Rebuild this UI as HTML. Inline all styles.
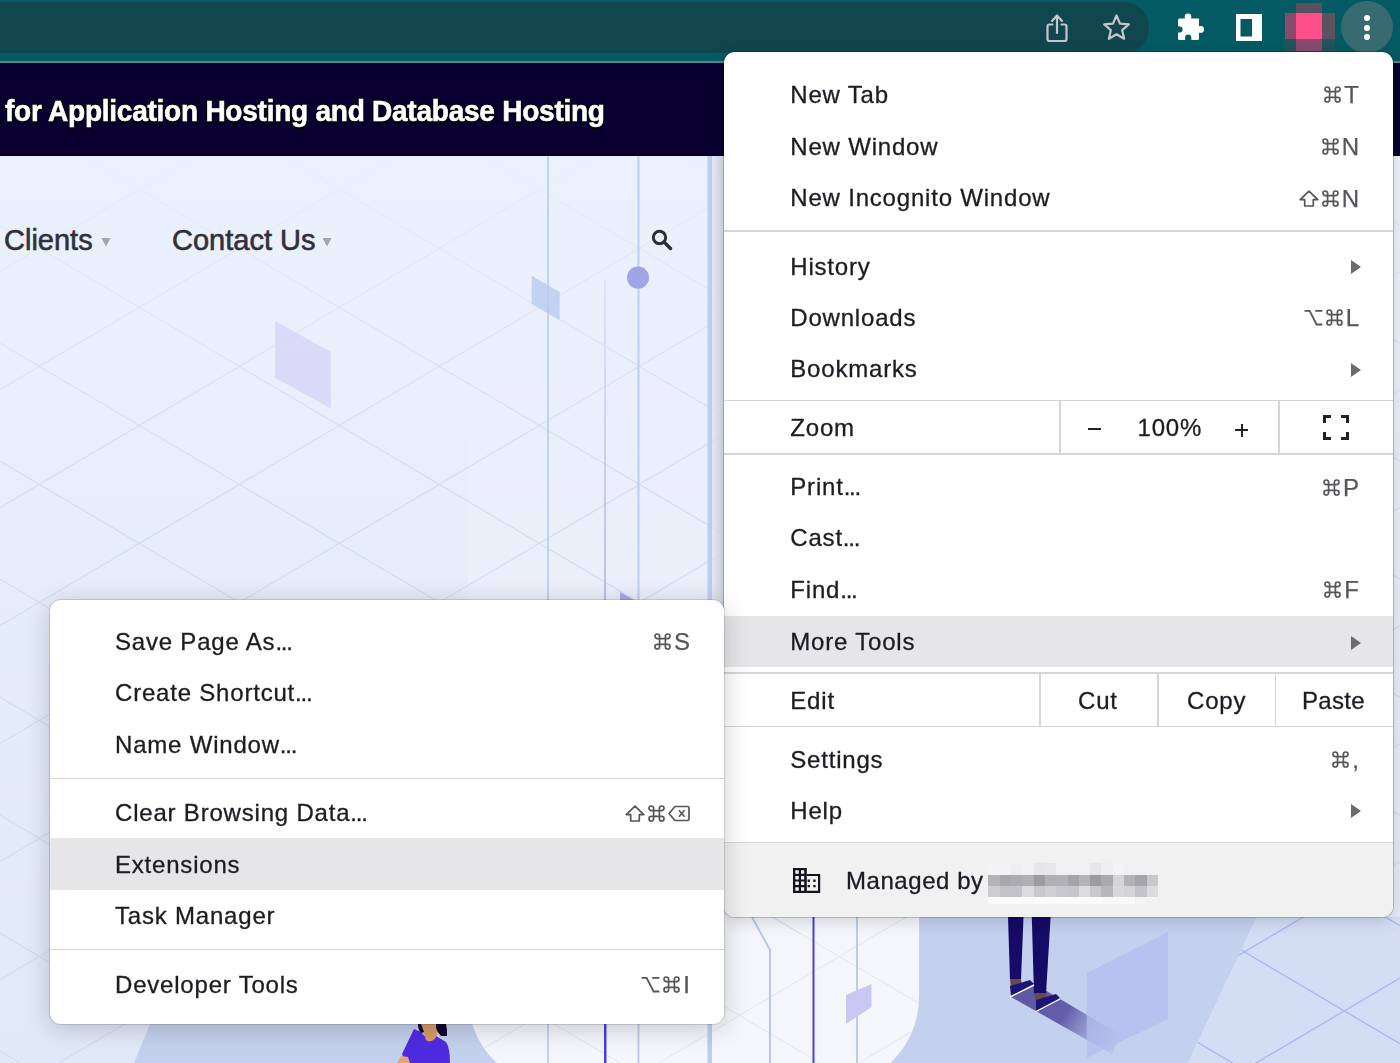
<!DOCTYPE html>
<html><head><meta charset="utf-8">
<style>
*{margin:0;padding:0;box-sizing:border-box}
html,body{width:1400px;height:1063px;overflow:hidden}
body{position:relative;background:#eaeefa;font-family:"Liberation Sans",sans-serif}
.abs{position:absolute}
#toolbar{left:0;top:0;width:1400px;height:63px;background:#045a62}
#omni{left:-40px;top:2px;width:1189px;height:51px;border-radius:0 25px 25px 0;background:#10474f}
#tline{left:0;top:61px;width:1400px;height:2px;background:#4a8a90}
#tline2{left:0;top:62.5px;width:1400px;height:1px;background:#000}
#hdr{left:0;top:63px;width:1400px;height:93px;background:#09002f;border-bottom:1px solid #050018}
#hdrtxt{left:5px;top:94px;font-weight:bold;font-size:30px;letter-spacing:-0.3px;color:#fff;white-space:nowrap;-webkit-text-stroke:0.6px #fff;transform:scaleX(0.936);transform-origin:0 0;
  text-shadow:1px 1px 0 #000,-1px 1px 0 #000,1px -1px 0 #000,-1px -1px 0 #000, 0 2px 1px #000}
#page{left:0;top:155px;width:1400px;height:908px;background:linear-gradient(#eff2fc,#e7ebf8)}
.nav{font-size:29px;color:#30303c;white-space:nowrap;-webkit-text-stroke:0.6px #30303c}
.menu{background:#fff;border-radius:11px;box-shadow:0 0 0 1px rgba(0,0,0,.13),0 5px 16px rgba(0,0,0,.14);overflow:hidden;will-change:transform}
.t{position:absolute;font-size:24px;line-height:24px;letter-spacing:0.8px;color:#1c1c24;white-space:nowrap;-webkit-text-stroke:0.3px #1c1c24}
.sc{position:absolute;display:flex;align-items:flex-end;height:17px;color:#55555c}
.sc .g{display:block;margin-left:3px}
.sc .k{display:block;-webkit-text-stroke:0.25px #55555c;font-size:24px;line-height:17px;height:17px;margin-left:3px;position:relative;top:0}
.arr{position:absolute}
.dots{letter-spacing:-1.2px}
.sep{position:absolute;left:0;right:0;height:1.5px;background:#d6d6d9}
.vsep{position:absolute;width:1.5px;background:#d6d6d9}
.hl{position:absolute;left:0;right:0;background:#e6e6e9}
.foot{position:absolute;left:0;right:0;background:#f1f1f1}
.zc{position:absolute}
</style></head><body>
<svg class="abs" style="left:0;top:0" width="1400" height="1063">
<defs>
<linearGradient id="bg" x1="0" y1="0" x2="0" y2="1"><stop offset="0" stop-color="#ebf1fc"/><stop offset="1" stop-color="#e1e8f7"/></linearGradient>
<linearGradient id="wp" x1="0" y1="0" x2="0" y2="1"><stop offset="0" stop-color="#f6f7fd" stop-opacity="0"/><stop offset="0.5" stop-color="#f6f7fd" stop-opacity="0.35"/><stop offset="1" stop-color="#f6f7fd" stop-opacity="1"/></linearGradient>
<linearGradient id="gm" gradientUnits="userSpaceOnUse" x1="0" y1="155" x2="0" y2="480"><stop offset="0" stop-color="#fff" stop-opacity="0.12"/><stop offset="0.45" stop-color="#fff" stop-opacity="0.5"/><stop offset="1" stop-color="#fff" stop-opacity="1"/></linearGradient>
<linearGradient id="sh" gradientUnits="userSpaceOnUse" x1="1022" y1="990" x2="1117" y2="1045"><stop offset="0" stop-color="#5d59a6"/><stop offset="0.45" stop-color="#625ea9"/><stop offset="1" stop-color="#aeb4e6" stop-opacity="0.4"/></linearGradient>
<mask id="gmask" maskUnits="userSpaceOnUse" x="0" y="155" width="1400" height="908">
<rect x="0" y="155" width="1400" height="908" fill="url(#gm)"/>
<path d="M134 1063L150 1024L919 917H1257L1188 1063Z" fill="#000"/>
<path d="M468 900H919V997A90 90 0 0 1 829 1087H558A90 90 0 0 1 468 997Z" fill="#fff" fill-opacity="0.5"/>
</mask>
<linearGradient id="ms" x1="0" y1="0" x2="1" y2="0"><stop offset="0" stop-color="#dfe4ef" stop-opacity="0.6"/><stop offset="1" stop-color="#d3d8e3"/></linearGradient>
<linearGradient id="l605" gradientUnits="userSpaceOnUse" x1="0" y1="280" x2="0" y2="600"><stop offset="0" stop-color="#dcdcf7"/><stop offset="0.5" stop-color="#c4c2f2"/><stop offset="1" stop-color="#a9a5ee"/></linearGradient>
<clipPath id="rc"><path d="M1257 917H1400V1063H1188Z"/></clipPath>
</defs>
<rect x="0" y="155" width="1400" height="908" fill="url(#bg)"/>
<path d="M468 300H919V997A90 90 0 0 1 829 1087H558A90 90 0 0 1 468 997Z" fill="url(#wp)"/>
<path d="M150 1024L919 917H1257L1188 1063H134Z" fill="#c4d1ee"/>
<path d="M1257 917H1400V1063H1188Z" fill="#d3def5"/>
<path d="M468 900H919V997A90 90 0 0 1 829 1087H558A90 90 0 0 1 468 997Z" fill="#f5f6fc"/>
<path d="M0 -600.8L1400 225.2M0 -482.8L1400 343.2M0 -364.8L1400 461.2M0 -246.8L1400 579.2M0 -128.8L1400 697.2M0 -10.8L1400 815.2M0 107.2L1400 933.2M0 225.2L1400 1051.2M0 343.2L1400 1169.2M0 461.2L1400 1287.2M0 579.2L1400 1405.2M0 697.2L1400 1523.2M0 815.2L1400 1641.2M0 933.2L1400 1759.2M0 1051.2L1400 1877.2M0 271.6L1400 -554.4M0 389.6L1400 -436.4M0 507.6L1400 -318.4M0 625.6L1400 -200.4M0 743.6L1400 -82.4M0 861.6L1400 35.6M0 979.6L1400 153.6M0 1097.6L1400 271.6M0 1215.6L1400 389.6M0 1333.6L1400 507.6M0 1451.6L1400 625.6M0 1569.6L1400 743.6M0 1687.6L1400 861.6M0 1805.6L1400 979.6" stroke="#d3d9f2" stroke-width="1.05" fill="none" mask="url(#gmask)"/>
<path d="M0 -608.2L1400 217.8M0 -490.2L1400 335.8M0 -372.2L1400 453.8M0 -254.2L1400 571.8M0 -136.2L1400 689.8M0 -18.2L1400 807.8M0 99.8L1400 925.8M0 217.8L1400 1043.8M0 335.8L1400 1161.8M0 453.8L1400 1279.8M0 571.8L1400 1397.8M0 689.8L1400 1515.8M0 807.8L1400 1633.8M0 925.8L1400 1751.8M0 1043.8L1400 1869.8M0 270.0L1400 -556.0M0 388.0L1400 -438.0M0 506.0L1400 -320.0M0 624.0L1400 -202.0M0 742.0L1400 -84.0M0 860.0L1400 34.0M0 978.0L1400 152.0M0 1096.0L1400 270.0M0 1214.0L1400 388.0M0 1332.0L1400 506.0M0 1450.0L1400 624.0M0 1568.0L1400 742.0M0 1686.0L1400 860.0M0 1804.0L1400 978.0" stroke="#abb5ee" stroke-width="1.3" fill="none" clip-path="url(#rc)"/>
<rect x="547.2" y="155" width="1.7" height="908" fill="#bccdee"/>
<rect x="637.5" y="155" width="2" height="908" fill="#bccdee"/>
<rect x="604.3" y="280" width="1.4" height="744" fill="url(#l605)"/>
<rect x="604" y="1024" width="2.5" height="40" fill="#4c3ee0"/>
<rect x="707.5" y="155" width="4.5" height="908" fill="#bccdee"/>
<rect x="712" y="155" width="12" height="762" fill="url(#ms)"/>
<path d="M531.7 275.7L559.7 292V320L531.7 304Z" fill="#b3c9ee" fill-opacity="0.75"/>
<path d="M275.2 321L330.8 352V408.6L275.2 377.7Z" fill="#d2d2f5" fill-opacity="0.7"/>
<circle cx="638" cy="277.6" r="11" fill="#a2a4e8"/>
<path d="M620 592L634 600H620Z" fill="#a9a7ee"/>
<path d="M752 917L770 950V1063" stroke="#b9c7ee" stroke-width="2" fill="none"/>
<rect x="812.5" y="917" width="2" height="146" fill="#4c3ee0"/>
<rect x="856" y="917" width="2" height="146" fill="#bccbeb"/>
<path d="M846 995L871.5 984V1007L846 1024Z" fill="#c9c8f4"/>
<path d="M1011 997L1033 983L1121 1035L1112 1054Z" fill="url(#sh)"/>
<path d="M1086.7 973L1167.8 932V1019L1086.7 1058Z" fill="#b3bdee" fill-opacity="0.75"/>
<path d="M1008 917H1023.5L1021 980H1010Z" fill="#160b66"/>
<path d="M1031.8 917H1050.6L1046 994H1034Z" fill="#160b66"/>
<path d="M1010 979H1021L1022 987L1011 990Z" fill="#6a4850"/>
<path d="M1034 993H1046L1047 1000L1036 1003Z" fill="#6a4850"/>
<path d="M1010 986L1030 980L1034 984L1011 997Z" fill="#1e1478"/>
<path d="M1010 997L1034 985" stroke="#fff" stroke-width="1.4"/>
<path d="M1036 1000L1056 994L1060 998L1036 1011Z" fill="#1e1478"/>
<path d="M1035 1012L1060 999" stroke="#fff" stroke-width="1.4"/>
<path d="M402 1054L414 1029L421 1032Q428 1042 436 1036L446 1042Q450 1048 450 1063H406Z" fill="#4f2be0"/>
<path d="M420 1024H437V1034Q436 1041 429 1041.5Q425 1041 425 1036L420 1030Z" fill="#d99a6a"/>
<path d="M436 1024H446Q447.5 1030 447 1036L441 1036Q437 1032 436 1028Z" fill="#0c0630"/>
<path d="M418 1024H421L424 1032L421 1033Q418 1030 418 1024Z" fill="#0c0630"/>
<path d="M397 1063L401 1056L408 1057L410 1063Z" fill="#e6a47a"/>
</svg>
<div id="toolbar" class="abs"></div>
<div id="omni" class="abs"></div>
<div id="tline" class="abs"></div>
<div id="tline2" class="abs"></div>
<svg class="abs" style="left:1040px;top:8px" width="100" height="40" viewBox="1040 8 100 40">
<path d="M1052.5 24.5H1049.5Q1047.5 24.5 1047.5 26.5V39Q1047.5 41 1049.5 41H1064.5Q1066.5 41 1066.5 39V26.5Q1066.5 24.5 1064.5 24.5H1061.5" fill="none" stroke="#c5c6cb" stroke-width="2.2" stroke-linecap="round"/>
<path d="M1057 33V16M1052 21L1057 15.5L1062 21" fill="none" stroke="#c5c6cb" stroke-width="2.2" stroke-linecap="round" stroke-linejoin="round"/>
<path d="M1116.5 15.5L1120 23.6L1128.8 24.4L1122.2 30.2L1124.1 38.8L1116.5 34.3L1108.9 38.8L1110.8 30.2L1104.2 24.4L1113 23.6Z" fill="none" stroke="#c5c6cb" stroke-width="2.2" stroke-linejoin="round"/>
</svg>
<svg class="abs" style="left:1170px;top:8px" width="100" height="40" viewBox="1170 8 100 40">
<path d="M1179.5 18.5H1199V38.5Q1199 40 1197.5 40H1179.5Q1178 40 1178 38.5V20Q1178 18.5 1179.5 18.5Z" fill="#fff"/>
<circle cx="1188" cy="16.8" r="3.3" fill="#fff"/><rect x="1185.2" y="16.8" width="5.6" height="3" fill="#fff"/>
<circle cx="1200.6" cy="29.4" r="3.4" fill="#fff"/><rect x="1197" y="26.6" width="3.6" height="5.6" fill="#fff"/>
<circle cx="1179.6" cy="29.4" r="3" fill="#045a62"/><rect x="1176" y="26.4" width="3.6" height="6" fill="#045a62"/>
<circle cx="1188.2" cy="37.6" r="3.1" fill="#045a62"/><rect x="1185.1" y="37.6" width="6.2" height="3" fill="#045a62"/>
<rect x="1236" y="14" width="26" height="27" fill="#fff"/>
<rect x="1240.5" y="19" width="11.5" height="17.5" fill="#045a62"/>
</svg>
<div class="abs" style="left:1296px;top:3px;width:26px;height:10px;background:#5b4f62"></div>
<div class="abs" style="left:1285px;top:13px;width:11px;height:26px;background:#8a4a6c"></div>
<div class="abs" style="left:1296px;top:13px;width:26px;height:26px;background:#fe4f8a"></div>
<div class="abs" style="left:1322px;top:13px;width:13px;height:26px;background:#5b5262"></div>
<div class="abs" style="left:1296px;top:39px;width:26px;height:12px;background:#874a6e"></div>
<div class="abs" style="left:1285px;top:39px;width:11px;height:12px;background:#24525d"></div>
<div class="abs" style="left:1322px;top:39px;width:13px;height:12px;background:#24525d"></div>
<div class="abs" style="left:1341px;top:1px;width:52px;height:52px;border-radius:50%;background:#386b71"></div>
<div class="abs" style="left:1364px;top:15px;width:6px;height:6px;border-radius:50%;background:#fff"></div>
<div class="abs" style="left:1364px;top:24.5px;width:6px;height:6px;border-radius:50%;background:#fff"></div>
<div class="abs" style="left:1364px;top:34px;width:6px;height:6px;border-radius:50%;background:#fff"></div>
<div id="hdr" class="abs"></div>
<div id="hdrtxt" class="abs">for Application Hosting and Database Hosting</div>

<div class="abs nav" style="left:4px;top:224px">Clients</div>
<div class="abs nav" style="left:172px;top:224px">Contact Us</div>
<svg class="abs" style="left:0;top:0" width="700" height="300">
<path d="M101.5 238H110.5L106 246.5Z" fill="#a3a4ad"/>
<path d="M322.5 238H331.5L327 246.5Z" fill="#a3a4ad"/>
<circle cx="659.5" cy="237.5" r="6.2" fill="none" stroke="#2e2e3a" stroke-width="3"/>
<path d="M664 242L670.5 248.5" stroke="#2e2e3a" stroke-width="3.4" stroke-linecap="round"/>
</svg>

<div id="menu" class="abs menu" style="left:724px;top:52px;width:669px;height:865px;box-shadow:0 0 0 1px rgba(0,0,0,.2),0 5px 16px rgba(0,0,0,.14)">
<div class="hl" style="top:563.5px;height:51px"></div>
<div class="foot" style="top:791px;height:80px"></div>
<div class="sep" style="top:178.25px"></div>
<div class="sep" style="top:347.75px"></div>
<div class="sep" style="top:401.25px"></div>
<div class="sep" style="top:620.25px"></div>
<div class="sep" style="top:673.75px"></div>
<div class="sep" style="top:789.75px"></div>
<div class="vsep" style="left:335.25px;top:348.5px;height:53.5px"></div>
<div class="vsep" style="left:554.25px;top:348.5px;height:53.5px"></div>
<div class="vsep" style="left:315.25px;top:621px;height:53.5px"></div>
<div class="vsep" style="left:433.25px;top:621px;height:53.5px"></div>
<div class="vsep" style="left:550.75px;top:621px;height:53.5px"></div>
<div class="t" style="top:30.7px;left:66.3px">New Tab</div>
<div class="sc" style="top:34.0px;right:34px"><span class="g"><svg width="17" height="17" viewBox="0 0 17 17" style="display:block"><path d="M5.6 5.6V3.3A2.3 2.3 0 1 0 3.3 5.6H13.7A2.3 2.3 0 1 0 11.4 3.3V13.7A2.3 2.3 0 1 0 13.7 11.4H3.3A2.3 2.3 0 1 0 5.6 13.7Z" fill="none" stroke="#55555c" stroke-width="1.7" stroke-linejoin="round"/></svg></span><span class="k">T</span></div>
<div class="t" style="top:82.7px;left:66.3px">New Window</div>
<div class="sc" style="top:86.0px;right:34px"><span class="g"><svg width="17" height="17" viewBox="0 0 17 17" style="display:block"><path d="M5.6 5.6V3.3A2.3 2.3 0 1 0 3.3 5.6H13.7A2.3 2.3 0 1 0 11.4 3.3V13.7A2.3 2.3 0 1 0 13.7 11.4H3.3A2.3 2.3 0 1 0 5.6 13.7Z" fill="none" stroke="#55555c" stroke-width="1.7" stroke-linejoin="round"/></svg></span><span class="k">N</span></div>
<div class="t" style="top:134.2px;left:66.3px">New Incognito Window</div>
<div class="sc" style="top:137.5px;right:34px"><span class="g"><svg width="20" height="17" viewBox="0 0 20 17" style="display:block"><path d="M10 1.2L18.8 9.6H14.3V16H5.7V9.6H1.2Z" fill="none" stroke="#55555c" stroke-width="1.7" stroke-linejoin="round"/></svg></span><span class="g"><svg width="17" height="17" viewBox="0 0 17 17" style="display:block"><path d="M5.6 5.6V3.3A2.3 2.3 0 1 0 3.3 5.6H13.7A2.3 2.3 0 1 0 11.4 3.3V13.7A2.3 2.3 0 1 0 13.7 11.4H3.3A2.3 2.3 0 1 0 5.6 13.7Z" fill="none" stroke="#55555c" stroke-width="1.7" stroke-linejoin="round"/></svg></span><span class="k">N</span></div>
<div class="t" style="top:202.7px;left:66.3px">History</div>
<div class="arr" style="top:208.0px;right:32px"><svg width="10" height="14" viewBox="0 0 10 14" style="display:block"><path d="M0 0L10 7L0 14Z" fill="#6b6b70"/></svg></div>
<div class="t" style="top:253.7px;left:66.3px">Downloads</div>
<div class="sc" style="top:257.0px;right:34px"><span class="g"><svg width="19" height="17" viewBox="0 0 19 17" style="display:block"><path d="M0.5 1.9H5.6L12.6 15.5H18.4M11.2 1.9H18.4" fill="none" stroke="#55555c" stroke-width="1.8"/></svg></span><span class="g"><svg width="17" height="17" viewBox="0 0 17 17" style="display:block"><path d="M5.6 5.6V3.3A2.3 2.3 0 1 0 3.3 5.6H13.7A2.3 2.3 0 1 0 11.4 3.3V13.7A2.3 2.3 0 1 0 13.7 11.4H3.3A2.3 2.3 0 1 0 5.6 13.7Z" fill="none" stroke="#55555c" stroke-width="1.7" stroke-linejoin="round"/></svg></span><span class="k">L</span></div>
<div class="t" style="top:305.2px;left:66.3px">Bookmarks</div>
<div class="arr" style="top:310.5px;right:32px"><svg width="10" height="14" viewBox="0 0 10 14" style="display:block"><path d="M0 0L10 7L0 14Z" fill="#6b6b70"/></svg></div>
<div class="t" style="top:423.3px;left:66.3px">Print<span class="dots">...</span></div>
<div class="sc" style="top:426.6px;right:34px"><span class="g"><svg width="17" height="17" viewBox="0 0 17 17" style="display:block"><path d="M5.6 5.6V3.3A2.3 2.3 0 1 0 3.3 5.6H13.7A2.3 2.3 0 1 0 11.4 3.3V13.7A2.3 2.3 0 1 0 13.7 11.4H3.3A2.3 2.3 0 1 0 5.6 13.7Z" fill="none" stroke="#55555c" stroke-width="1.7" stroke-linejoin="round"/></svg></span><span class="k">P</span></div>
<div class="t" style="top:474.3px;left:66.3px">Cast<span class="dots">...</span></div>
<div class="t" style="top:526.0px;left:66.3px">Find<span class="dots">...</span></div>
<div class="sc" style="top:529.3px;right:34px"><span class="g"><svg width="17" height="17" viewBox="0 0 17 17" style="display:block"><path d="M5.6 5.6V3.3A2.3 2.3 0 1 0 3.3 5.6H13.7A2.3 2.3 0 1 0 11.4 3.3V13.7A2.3 2.3 0 1 0 13.7 11.4H3.3A2.3 2.3 0 1 0 5.6 13.7Z" fill="none" stroke="#55555c" stroke-width="1.7" stroke-linejoin="round"/></svg></span><span class="k">F</span></div>
<div class="t" style="top:578.2px;left:66.3px">More Tools</div>
<div class="arr" style="top:583.5px;right:32px"><svg width="10" height="14" viewBox="0 0 10 14" style="display:block"><path d="M0 0L10 7L0 14Z" fill="#6b6b70"/></svg></div>
<div class="t" style="top:695.7px;left:66.3px">Settings</div>
<div class="sc" style="top:699.0px;right:34px"><span class="g"><svg width="17" height="17" viewBox="0 0 17 17" style="display:block"><path d="M5.6 5.6V3.3A2.3 2.3 0 1 0 3.3 5.6H13.7A2.3 2.3 0 1 0 11.4 3.3V13.7A2.3 2.3 0 1 0 13.7 11.4H3.3A2.3 2.3 0 1 0 5.6 13.7Z" fill="none" stroke="#55555c" stroke-width="1.7" stroke-linejoin="round"/></svg></span><span class="k">,</span></div>
<div class="t" style="top:746.7px;left:66.3px">Help</div>
<div class="arr" style="top:752.0px;right:32px"><svg width="10" height="14" viewBox="0 0 10 14" style="display:block"><path d="M0 0L10 7L0 14Z" fill="#6b6b70"/></svg></div>
<div class="t" style="top:364.2px;left:66.3px">Zoom</div>
<div class="t" style="top:636.7px;left:66.3px">Edit</div>
<div class="zc" style="left:363.5px;top:376px;width:13.5px;height:2px;background:#222"></div>
<div class="t" style="top:364.2px;left:413.5px">100%</div>
<div class="zc" style="left:511px;top:377px;width:13px;height:2px;background:#222"></div>
<div class="zc" style="left:516.5px;top:371.5px;width:2px;height:13px;background:#222"></div>
<svg class="zc" style="left:598px;top:362px" width="28" height="27" viewBox="0 0 28 27"><path d="M2.5 9V2.5H9M19 2.5H25.5V9M25.5 18V24.5H19M9 24.5H2.5V18" fill="none" stroke="#222" stroke-width="3"/></svg>
<div class="t" style="top:636.7px;left:354px">Cut</div>
<div class="t" style="top:636.7px;left:463px">Copy</div>
<div class="t" style="top:636.7px;left:578px;letter-spacing:0.3px">Paste</div>
<svg class="zc" style="left:69px;top:816px" width="28" height="26" viewBox="0 0 28 26"><rect x="0" y="0" width="13.8" height="25" fill="#141420"/><path d="M2.3 2.3h3.5v3.5H2.3zM8 2.3h3.2v3.5H8zM2.3 8h3.5v3.5H2.3zM8 8h3.2v3.5H8zM2.3 13.6h3.5v3.5H2.3zM8 13.6h3.2v3.5H8zM2.3 19.2h3.5v3.5H2.3zM8 19.2h3.2v3.5H8z" fill="#f2f2f4"/><path d="M13.5 7H26.1V23.9H13.5" fill="none" stroke="#141420" stroke-width="2.2"/><path d="M14.6 11.6h2.3v2.3h-2.3zM20.3 11.6h2.3v2.3h-2.3zM14.6 17h2.3v2.3h-2.3zM20.3 17h2.3v2.3h-2.3z" fill="#141420"/></svg>
<div class="t" style="top:816.7px;left:122px;letter-spacing:0.55px">Managed by</div>
<div class="zc" style="left:264.4px;top:811.4px;width:11.4px;height:11.3px;background:#f4f4f6"></div>
<div class="zc" style="left:275.7px;top:811.4px;width:11.4px;height:11.3px;background:#f3f3f5"></div>
<div class="zc" style="left:287.0px;top:811.4px;width:11.4px;height:11.3px;background:#eeeef0"></div>
<div class="zc" style="left:298.3px;top:811.4px;width:11.4px;height:11.3px;background:#f1f1f3"></div>
<div class="zc" style="left:309.6px;top:811.4px;width:11.4px;height:11.3px;background:#e6e6e8"></div>
<div class="zc" style="left:320.9px;top:811.4px;width:11.4px;height:11.3px;background:#e8e8ea"></div>
<div class="zc" style="left:332.2px;top:811.4px;width:11.4px;height:11.3px;background:#f0f0f2"></div>
<div class="zc" style="left:343.5px;top:811.4px;width:11.4px;height:11.3px;background:#f0f0f2"></div>
<div class="zc" style="left:354.8px;top:811.4px;width:11.4px;height:11.3px;background:#f0f0f2"></div>
<div class="zc" style="left:366.1px;top:811.4px;width:11.4px;height:11.3px;background:#e6e6e8"></div>
<div class="zc" style="left:377.4px;top:811.4px;width:11.4px;height:11.3px;background:#eeeef0"></div>
<div class="zc" style="left:388.7px;top:811.4px;width:11.4px;height:11.3px;background:#f3f3f5"></div>
<div class="zc" style="left:400.0px;top:811.4px;width:11.4px;height:11.3px;background:#f0f0f2"></div>
<div class="zc" style="left:411.3px;top:811.4px;width:11.4px;height:11.3px;background:#f0f0f2"></div>
<div class="zc" style="left:422.6px;top:811.4px;width:11.4px;height:11.3px;background:#f0f0f2"></div>
<div class="zc" style="left:264.4px;top:822.7px;width:11.4px;height:11.3px;background:#b4b4b8"></div>
<div class="zc" style="left:275.7px;top:822.7px;width:11.4px;height:11.3px;background:#a8a8ac"></div>
<div class="zc" style="left:287.0px;top:822.7px;width:11.4px;height:11.3px;background:#acacb0"></div>
<div class="zc" style="left:298.3px;top:822.7px;width:11.4px;height:11.3px;background:#b0b0b4"></div>
<div class="zc" style="left:309.6px;top:822.7px;width:11.4px;height:11.3px;background:#9c9c9e"></div>
<div class="zc" style="left:320.9px;top:822.7px;width:11.4px;height:11.3px;background:#b0b0b4"></div>
<div class="zc" style="left:332.2px;top:822.7px;width:11.4px;height:11.3px;background:#b2b2b6"></div>
<div class="zc" style="left:343.5px;top:822.7px;width:11.4px;height:11.3px;background:#a4a4a8"></div>
<div class="zc" style="left:354.8px;top:822.7px;width:11.4px;height:11.3px;background:#b4b4b8"></div>
<div class="zc" style="left:366.1px;top:822.7px;width:11.4px;height:11.3px;background:#9d9b9c"></div>
<div class="zc" style="left:377.4px;top:822.7px;width:11.4px;height:11.3px;background:#a8aab0"></div>
<div class="zc" style="left:388.7px;top:822.7px;width:11.4px;height:11.3px;background:#d5d5d7"></div>
<div class="zc" style="left:400.0px;top:822.7px;width:11.4px;height:11.3px;background:#b2b2b6"></div>
<div class="zc" style="left:411.3px;top:822.7px;width:11.4px;height:11.3px;background:#a4a5aa"></div>
<div class="zc" style="left:422.6px;top:822.7px;width:11.4px;height:11.3px;background:#c9c9cc"></div>
<div class="zc" style="left:264.4px;top:834.0px;width:11.4px;height:11.3px;background:#cdcdd0"></div>
<div class="zc" style="left:275.7px;top:834.0px;width:11.4px;height:11.3px;background:#c4c4c8"></div>
<div class="zc" style="left:287.0px;top:834.0px;width:11.4px;height:11.3px;background:#c4c4c8"></div>
<div class="zc" style="left:298.3px;top:834.0px;width:11.4px;height:11.3px;background:#dcdcde"></div>
<div class="zc" style="left:309.6px;top:834.0px;width:11.4px;height:11.3px;background:#c8c8cc"></div>
<div class="zc" style="left:320.9px;top:834.0px;width:11.4px;height:11.3px;background:#d0d0d2"></div>
<div class="zc" style="left:332.2px;top:834.0px;width:11.4px;height:11.3px;background:#c8c8cc"></div>
<div class="zc" style="left:343.5px;top:834.0px;width:11.4px;height:11.3px;background:#c6c6ca"></div>
<div class="zc" style="left:354.8px;top:834.0px;width:11.4px;height:11.3px;background:#dcdcde"></div>
<div class="zc" style="left:366.1px;top:834.0px;width:11.4px;height:11.3px;background:#c8c8cc"></div>
<div class="zc" style="left:377.4px;top:834.0px;width:11.4px;height:11.3px;background:#b8b8bc"></div>
<div class="zc" style="left:388.7px;top:834.0px;width:11.4px;height:11.3px;background:#d8d8da"></div>
<div class="zc" style="left:400.0px;top:834.0px;width:11.4px;height:11.3px;background:#d4d4d6"></div>
<div class="zc" style="left:411.3px;top:834.0px;width:11.4px;height:11.3px;background:#c4c4c8"></div>
<div class="zc" style="left:422.6px;top:834.0px;width:11.4px;height:11.3px;background:#dcdcde"></div>
<div class="zc" style="left:264.4px;top:845.3px;width:11.4px;height:6.5px;background:#fafafb"></div>
<div class="zc" style="left:275.7px;top:845.3px;width:11.4px;height:6.5px;background:#fbfbfc"></div>
<div class="zc" style="left:287.0px;top:845.3px;width:11.4px;height:6.5px;background:#fbfbfc"></div>
<div class="zc" style="left:298.3px;top:845.3px;width:11.4px;height:6.5px;background:#fafafb"></div>
<div class="zc" style="left:309.6px;top:845.3px;width:11.4px;height:6.5px;background:#fcfcfd"></div>
<div class="zc" style="left:320.9px;top:845.3px;width:11.4px;height:6.5px;background:#fbfbfc"></div>
<div class="zc" style="left:332.2px;top:845.3px;width:11.4px;height:6.5px;background:#fafafb"></div>
<div class="zc" style="left:343.5px;top:845.3px;width:11.4px;height:6.5px;background:#fafafb"></div>
<div class="zc" style="left:354.8px;top:845.3px;width:11.4px;height:6.5px;background:#fbfbfc"></div>
<div class="zc" style="left:366.1px;top:845.3px;width:11.4px;height:6.5px;background:#fafafb"></div>
<div class="zc" style="left:377.4px;top:845.3px;width:11.4px;height:6.5px;background:#f8f8f9"></div>
<div class="zc" style="left:388.7px;top:845.3px;width:11.4px;height:6.5px;background:#f9f9fa"></div>
<div class="zc" style="left:400.0px;top:845.3px;width:11.4px;height:6.5px;background:#fafafb"></div>
<div class="zc" style="left:411.3px;top:845.3px;width:11.4px;height:6.5px;background:#f4f4f6"></div>
<div class="zc" style="left:422.6px;top:845.3px;width:11.4px;height:6.5px;background:#f3f3f5"></div>
</div>

<div id="sub" class="abs menu" style="left:50px;top:600px;width:674px;height:424px;box-shadow:0 0 0 1px rgba(0,0,0,.12),0 4px 26px rgba(0,0,0,.2)">
<div class="hl" style="top:238px;height:51.5px"></div>
<div class="sep" style="top:177.65px"></div>
<div class="sep" style="top:348.85px"></div>
<div class="t" style="top:29.7px;left:65px">Save Page As<span class="dots">...</span></div>
<div class="sc" style="top:33.0px;right:34px"><span class="g"><svg width="17" height="17" viewBox="0 0 17 17" style="display:block"><path d="M5.6 5.6V3.3A2.3 2.3 0 1 0 3.3 5.6H13.7A2.3 2.3 0 1 0 11.4 3.3V13.7A2.3 2.3 0 1 0 13.7 11.4H3.3A2.3 2.3 0 1 0 5.6 13.7Z" fill="none" stroke="#55555c" stroke-width="1.7" stroke-linejoin="round"/></svg></span><span class="k">S</span></div>
<div class="t" style="top:81.1px;left:65px">Create Shortcut<span class="dots">...</span></div>
<div class="t" style="top:132.6px;left:65px">Name Window<span class="dots">...</span></div>
<div class="t" style="top:201.3px;left:65px">Clear Browsing Data<span class="dots">...</span></div>
<div class="sc" style="top:204.6px;right:34px"><span class="g"><svg width="20" height="17" viewBox="0 0 20 17" style="display:block"><path d="M10 1.2L18.8 9.6H14.3V16H5.7V9.6H1.2Z" fill="none" stroke="#55555c" stroke-width="1.7" stroke-linejoin="round"/></svg></span><span class="g"><svg width="17" height="17" viewBox="0 0 17 17" style="display:block"><path d="M5.6 5.6V3.3A2.3 2.3 0 1 0 3.3 5.6H13.7A2.3 2.3 0 1 0 11.4 3.3V13.7A2.3 2.3 0 1 0 13.7 11.4H3.3A2.3 2.3 0 1 0 5.6 13.7Z" fill="none" stroke="#55555c" stroke-width="1.7" stroke-linejoin="round"/></svg></span><span class="g"><svg width="22" height="17" viewBox="0 0 22 17" style="display:block"><path d="M7 1.5H19.5Q21 1.5 21 3V14Q21 15.5 19.5 15.5H7L1 8.5Z" fill="none" stroke="#55555c" stroke-width="1.7" stroke-linejoin="round"/><path d="M11 5.2L16.5 11.8M16.5 5.2L11 11.8" stroke="#55555c" stroke-width="1.6"/></svg></span></div>
<div class="t" style="top:252.6px;left:65px">Extensions</div>
<div class="t" style="top:303.7px;left:65px">Task Manager</div>
<div class="t" style="top:372.5px;left:65px">Developer Tools</div>
<div class="sc" style="top:375.8px;right:34px"><span class="g"><svg width="19" height="17" viewBox="0 0 19 17" style="display:block"><path d="M0.5 1.9H5.6L12.6 15.5H18.4M11.2 1.9H18.4" fill="none" stroke="#55555c" stroke-width="1.8"/></svg></span><span class="g"><svg width="17" height="17" viewBox="0 0 17 17" style="display:block"><path d="M5.6 5.6V3.3A2.3 2.3 0 1 0 3.3 5.6H13.7A2.3 2.3 0 1 0 11.4 3.3V13.7A2.3 2.3 0 1 0 13.7 11.4H3.3A2.3 2.3 0 1 0 5.6 13.7Z" fill="none" stroke="#55555c" stroke-width="1.7" stroke-linejoin="round"/></svg></span><span class="k">I</span></div>
</div>
</body></html>
